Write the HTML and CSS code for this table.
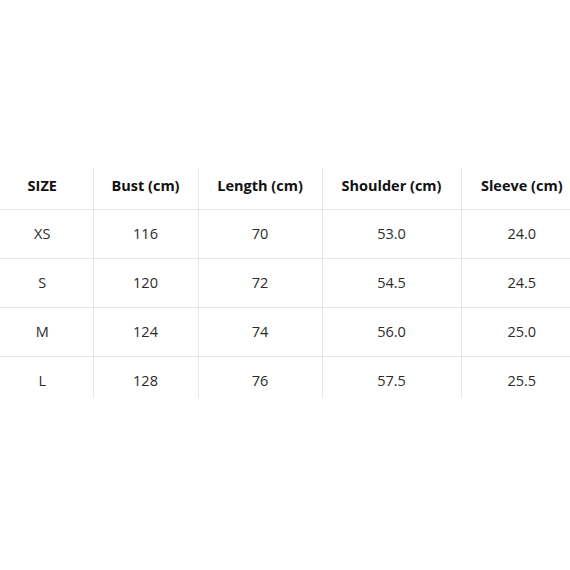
FILE: index.html
```html
<!DOCTYPE html>
<html>
<head>
<meta charset="utf-8">
<link rel="stylesheet" href="styles.css">
</head>
<body>
<div class="page">
  <table class="sizes">
    <colgroup>
      <col class="c1"><col class="c2"><col class="c3"><col class="c4"><col class="c5">
    </colgroup>
    <thead>
      <tr><th>SIZE</th><th>Bust (cm)</th><th>Length (cm)</th><th>Shoulder (cm)</th><th>Sleeve (cm)</th></tr>
    </thead>
    <tbody>
      <tr><td>XS</td><td>116</td><td>70</td><td>53.0</td><td>24.0</td></tr>
      <tr><td>S</td><td>120</td><td>72</td><td>54.5</td><td>24.5</td></tr>
      <tr><td>M</td><td>124</td><td>74</td><td>56.0</td><td>25.0</td></tr>
      <tr class="last"><td>L</td><td>128</td><td>76</td><td>57.5</td><td>25.5</td></tr>
    </tbody>
  </table>
</div>
</body>
</html>
```
FILE: styles.css
```css
html, body {
  margin: 0;
  padding: 0;
  background: #fff;
}
body {
  width: 570px;
  height: 570px;
  overflow: hidden;
  font-family: "Open Sans", "Noto Sans", sans-serif;
}
.page {
  padding-top: 168px;
}
.sizes {
  margin-left: -8px;
  width: 590px;
  table-layout: fixed;
  border-collapse: collapse;
  font-size: 14.5px;
}
.c1 { width: 101px; }
.c2 { width: 105px; }
.c3 { width: 124px; }
.c4 { width: 139px; }
.c5 { width: 121px; }
.sizes th, .sizes td {
  padding: 0;
  text-align: center;
  border-left: 1px solid #e6e6e6;
  border-bottom: 1px solid #e6e6e6;
  box-sizing: border-box;
}
.sizes th:first-child, .sizes td:first-child {
  border-left: none;
}
.sizes th {
  height: 41px;
  padding-bottom: 6px;
  font-weight: 700;
  color: #111;
}
.sizes td {
  height: 49px;
  color: #2b2b2b;
}
.sizes tr.last td {
  height: 42px;
  border-bottom: none;
  padding-top: 6px;
}
```
